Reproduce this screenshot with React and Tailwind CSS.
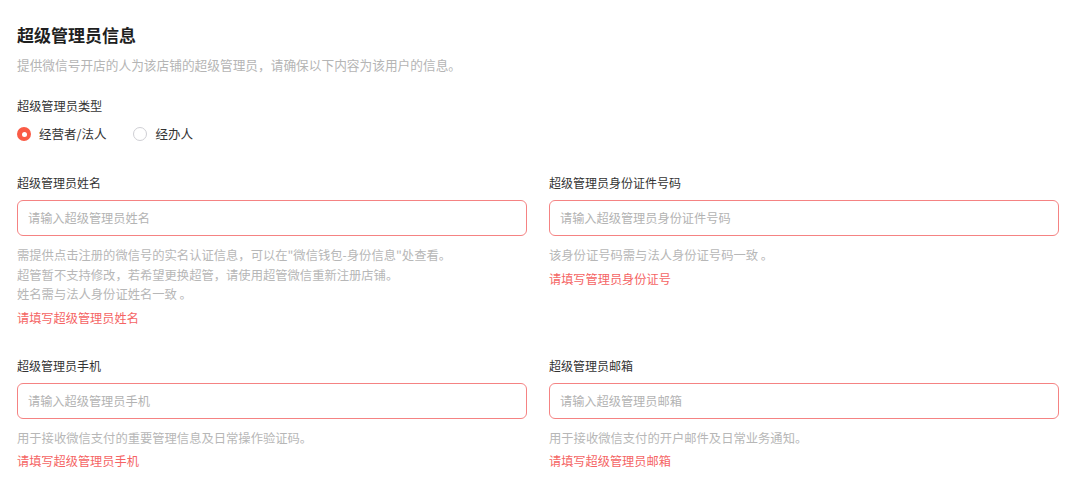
import { useState } from "react"

const fields = [
  {
    label: "超级管理员姓名",
    placeholder: "请输入超级管理员姓名",
    help: [
      "需提供点击注册的微信号的实名认证信息，可以在\"微信钱包-身份信息\"处查看。",
      "超管暂不支持修改，若希望更换超管，请使用超管微信重新注册店铺。",
      "姓名需与法人身份证姓名一致 。",
    ],
    error: "请填写超级管理员姓名",
  },
  {
    label: "超级管理员身份证件号码",
    placeholder: "请输入超级管理员身份证件号码",
    help: ["该身份证号码需与法人身份证号码一致 。"],
    error: "请填写管理员身份证号",
  },
  {
    label: "超级管理员手机",
    placeholder: "请输入超级管理员手机",
    help: ["用于接收微信支付的重要管理信息及日常操作验证码。"],
    error: "请填写超级管理员手机",
  },
  {
    label: "超级管理员邮箱",
    placeholder: "请输入超级管理员邮箱",
    help: ["用于接收微信支付的开户邮件及日常业务通知。"],
    error: "请填写超级管理员邮箱",
  },
]

function Radio({ checked, label, onClick }) {
  return (
    <button type="button" onClick={onClick} className="flex items-center gap-[8px] h-[20px]">
      {checked ? (
        <span className="w-[14px] h-[14px] rounded-full bg-[#fa5b46] flex items-center justify-center">
          <span className="w-[5px] h-[5px] rounded-full bg-white" />
        </span>
      ) : (
        <span className="w-[14px] h-[14px] rounded-full border border-[#cfcfd4] bg-white" />
      )}
      <span className="text-[12.5px] leading-[20px] text-[#333]">{label}</span>
    </button>
  )
}

function Field({ field }) {
  return (
    <div>
      <div className="text-[12px] leading-[20px] text-[#333]">{field.label}</div>
      <input
        placeholder={field.placeholder}
        className="mt-[7px] w-full h-[36px] rounded-[6px] border border-[#f58383] px-[10px] text-[12.2px] text-[#333] outline-none placeholder:text-[#b3b3b3]"
      />
      <div className="mt-[10px] text-[12.3px] leading-[19.5px] text-[#b7b7b7]">
        {field.help.map((line) => (
          <div key={line}>{line}</div>
        ))}
      </div>
      <div className="mt-[3px] text-[12.2px] leading-[20px] text-[#f56464]">{field.error}</div>
    </div>
  )
}

export default function App() {
  const [type, setType] = useState("legal")

  return (
    <div
      className="w-[1080px] h-[485px] bg-white overflow-hidden pl-[17px] pr-[21px] pt-[23px]"
      style={{ fontFamily: '"Noto Sans CJK SC", "Noto Sans", sans-serif' }}
    >
      {/* Header */}
      <h1 className="text-[17px] leading-[24px] font-bold text-[#1f1f1f]">超级管理员信息</h1>
      <p className="mt-[8px] text-[12.7px] leading-[20px] text-[#b5b5b5]">
        提供微信号开店的人为该店铺的超级管理员，请确保以下内容为该用户的信息。
      </p>

      {/* Admin type */}
      <div className="mt-[21px] text-[12.2px] leading-[20px] text-[#333]">超级管理员类型</div>
      <div className="mt-[8px] flex items-center gap-[27px]">
        <Radio checked={type === "legal"} label="经营者/法人" onClick={() => setType("legal")} />
        <Radio checked={type === "agent"} label="经办人" onClick={() => setType("agent")} />
      </div>

      {/* Fields */}
      <div className="mt-[29px] grid grid-cols-2 gap-x-[22px] gap-y-[28px]">
        {fields.map((f) => (
          <Field key={f.label} field={f} />
        ))}
      </div>
    </div>
  )
}
